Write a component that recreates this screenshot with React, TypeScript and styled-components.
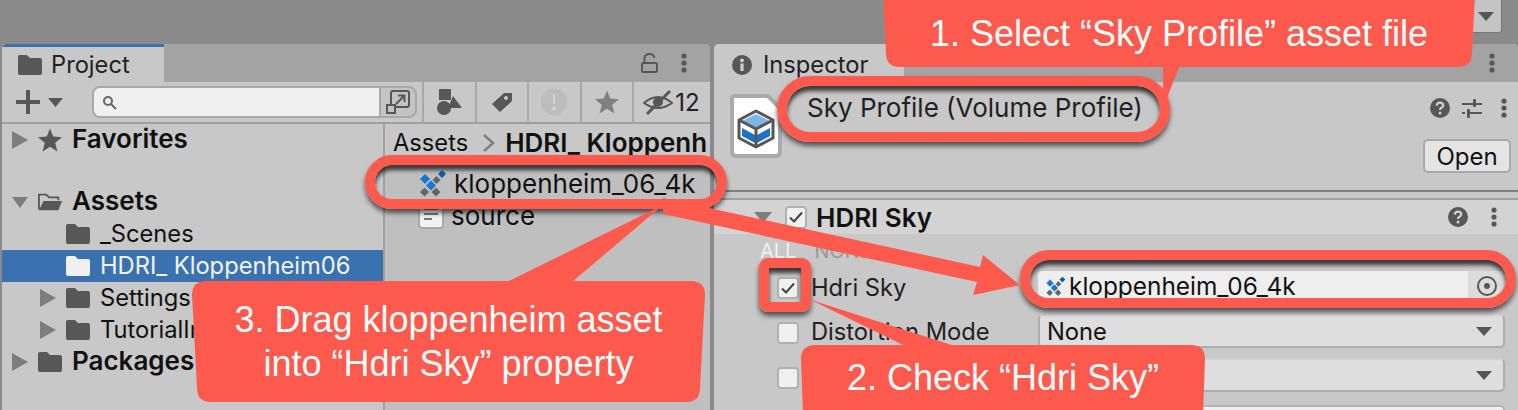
import React, { FC } from 'react';
import styled, { createGlobalStyle } from 'styled-components';

const GlobalStyle = createGlobalStyle`
  html, body {
    margin: 0;
    padding: 0;
    background: #8a8a8a;
  }
  * {
    box-sizing: border-box;
  }
`;

const Page = styled('div')`
  position: relative;
  display: flex;
  flex-direction: column;
  width: 1518px;
  height: 410px;
  overflow: hidden;
  background: #8a8a8a;
  color: #111;
  font-family: Inter, 'Noto Sans', sans-serif;
  font-size: 23.7px;
`;

const TopBar = styled('div')`
  display: flex;
  justify-content: flex-end;
  height: 44px;
  padding-right: 16px;
`;

const TopDropdown = styled('div')`
  display: flex;
  align-items: center;
  justify-content: center;
  width: 32px;
  height: 33px;
  background: #c4c4c4;
  border: 1px solid #777;
  border-top: none;
  border-radius: 0 0 3px 3px;
`;

const Panels = styled('div')`
  display: flex;
  flex: 1;
  gap: 4px;
  min-height: 0;
  padding-left: 2px;
`;

const ProjectPanel = styled('section')`
  display: flex;
  flex-direction: column;
  width: 708px;
  background: #c8c8c8;
  border-radius: 5px 5px 0 0;
  overflow: hidden;
`;

const InspectorPanel = styled('section')`
  display: flex;
  flex-direction: column;
  flex: 1;
  background: #c8c8c8;
  border-radius: 5px 5px 0 0;
  overflow: hidden;
`;

const TabStrip = styled('div')`
  display: flex;
  align-items: center;
  justify-content: space-between;
  height: 38px;
  padding-right: 23px;
  background: #a3a3a3;
  flex: none;
`;

const Tab = styled('div')<{ $width: number; $accent?: boolean }>`
  display: flex;
  align-items: center;
  gap: ${p => (p.$accent ? 9 : 11)}px;
  width: ${p => p.$width}px;
  height: 38px;
  padding-left: ${p => (p.$accent ? 16 : 18)}px;
  padding-top: ${p => (p.$accent ? 0 : 3)}px;
  background: #c8c8c8;
  border-top: ${p => (p.$accent ? '3px solid #3a72b0' : 'none')};
  color: #222;
`;

const TabActions = styled('div')`
  display: flex;
  align-items: center;
  gap: 23px;
`;

const Toolbar = styled('div')`
  display: flex;
  align-items: stretch;
  height: 42px;
  background: #c8c8c8;
  border-bottom: 2px solid #a0a0a0;
  flex: none;
`;

const AddButton = styled('div')`
  display: flex;
  align-items: center;
  gap: 8px;
  width: 90px;
  padding-left: 14px;
`;

const SearchBox = styled('div')`
  display: flex;
  width: 325px;
  height: 32px;
  margin-top: 4px;
  background: #c4c4c4;
  border: 2px solid #a8a8a8;
  border-radius: 8px;
  overflow: hidden;
`;

const SearchInput = styled('div')`
  display: flex;
  align-items: center;
  width: 287px;
  padding-left: 8px;
  background: #f0f0f0;
  border-right: 2px solid #a8a8a8;
`;

const SearchScope = styled('div')`
  display: flex;
  align-items: center;
  justify-content: center;
  flex: 1;
`;

const ToolGroup = styled('div')`
  display: flex;
  margin-left: 5px;
  flex: 1;
`;

const ToolButton = styled('div')<{ $width?: number }>`
  display: flex;
  align-items: center;
  justify-content: center;
  gap: 2px;
  width: ${p => p.$width ?? 52.5}px;
  flex: none;
  border-left: 2px solid #a8a8a8;
  font-size: 24px;
  color: #222;
`;

const Browser = styled('div')`
  display: flex;
  flex: 1;
  min-height: 0;
`;

const Tree = styled('div')`
  display: flex;
  flex-direction: column;
  width: 381px;
  flex: none;
`;

const TreeRow = styled('div')<{ $depth?: number; $selected?: boolean; $bold?: boolean; $gapAfter?: number }>`
  display: flex;
  align-items: center;
  height: 32px;
  flex: none;
  padding-left: ${p => 10 + (p.$depth ?? 0) * 28}px;
  margin-bottom: ${p => p.$gapAfter ?? 0}px;
  background: ${p => (p.$selected ? '#3a72b0' : 'transparent')};
  color: ${p => (p.$selected ? '#f2f2f2' : '#111')};
  font-size: ${p => (p.$bold ? 26 : 23.7)}px;
  font-weight: ${p => (p.$bold ? 600 : 400)};
  line-height: ${p => (p.$bold ? 28 : 32)}px;
  white-space: nowrap;
`;

const Disclosure = styled('span')`
  display: flex;
  width: 16px;
  margin-right: 10px;
  flex: none;
`;

const RowIcon = styled('span')`
  display: flex;
  width: 24px;
  margin-right: 10px;
  flex: none;
`;

const BoldLabel = styled('span')`
  margin-bottom: 2px;
`;

const FileList = styled('div')`
  display: flex;
  flex-direction: column;
  flex: 1;
  min-width: 0;
  border-left: 2px solid #a0a0a0;
  background: #bfbfbf;
`;

const Breadcrumb = styled('div')`
  display: flex;
  align-items: center;
  height: 43px;
  padding: 0 0 6px 8px;
  background: #c8c8c8;
  white-space: nowrap;
  flex: none;
  svg {
    flex: none;
    margin: 0 10px 0 15px;
  }
`;

const CrumbStrong = styled('span')`
  font-size: 26px;
  font-weight: 600;
`;

const FileRow = styled('div')`
  display: flex;
  align-items: center;
  gap: 7px;
  height: 32px;
  padding-left: 33px;
  font-size: 26px;
  white-space: nowrap;
  flex: none;
`;

const AssetHeader = styled('div')`
  display: grid;
  grid-template-columns: 52px 1fr auto;
  column-gap: 25px;
  height: 110px;
  padding: 12px 7px 0 16px;
  border-bottom: 2px solid #808080;
  flex: none;
`;

const AssetTitle = styled('div')`
  line-height: 28px;
  font-size: 26px;
  color: #222;
  white-space: nowrap;
`;

const AssetActions = styled('div')`
  display: flex;
  flex-direction: column;
  align-items: flex-end;
  gap: 21px;
  padding-top: 4px;
`;

const IconRow = styled('div')<{ $gap: number; $inset?: number }>`
  display: flex;
  align-items: center;
  gap: ${p => p.$gap}px;
  padding-right: ${p => p.$inset ?? 0}px;
`;

const KebabSlot = styled('span')`
  display: flex;
  margin-left: 7px;
`;

const OpenButton = styled('div')`
  display: flex;
  align-items: center;
  justify-content: center;
  width: 88px;
  height: 34px;
  background: #e4e4e4;
  border: 2px solid #a8a8a8;
  border-radius: 5px;
  font-size: 24px;
`;

const SectionSpacer = styled('div')`
  height: 8px;
  border-bottom: 2px solid #a0a0a0;
  flex: none;
`;

const SectionHeader = styled('div')`
  display: flex;
  align-items: center;
  height: 34px;
  padding: 0 21px 0 40px;
  background: #d3d3d3;
  flex: none;
`;

const SectionTitle = styled('div')`
  flex: 1;
  margin-left: 9px;
  font-size: 26px;
  font-weight: 600;
`;

const SectionTriangle = styled('span')`
  display: flex;
  width: 18px;
  margin-right: 13px;
`;

const ToggleLinks = styled('div')`
  display: flex;
  align-items: center;
  gap: 18px;
  height: 36px;
  padding: 0 0 2px 46px;
  font-size: 20px;
  color: #f0f0f0;
  flex: none;
`;

const MutedLink = styled('span')`
  color: #999;
`;

const PropertyRows = styled('div')`
  display: flex;
  flex-direction: column;
  gap: 10px;
  padding: 0 13px 0 63px;
`;

const PropertyRow = styled('div')`
  display: grid;
  grid-template-columns: 22px 1fr 467px;
  column-gap: 12px;
  align-items: center;
  height: 34px;
  color: #222;
  flex: none;
`;

const CheckBox = styled('div')<{ $drop?: number }>`
  display: flex;
  align-items: center;
  justify-content: center;
  width: 22px;
  height: 22px;
  margin-top: ${p => (p.$drop ?? 0) * 2}px;
  background: #f0f0f0;
  border: 2px solid #b0b0b0;
  border-radius: 4px;
`;

const SectionCheck = styled(CheckBox)`
  height: 23px;
`;

const ObjectField = styled('div')`
  display: flex;
  align-items: stretch;
  height: 33px;
  background: #eeeeee;
  border-bottom: 2px solid #a8a8a8;
  border-radius: 4px;
  overflow: hidden;
  color: #111;
`;

const ObjectName = styled('div')`
  display: flex;
  align-items: center;
  gap: 3px;
  flex: 1;
  padding-left: 7px;
  font-size: 24.4px;
`;

const ObjectPicker = styled('div')`
  display: flex;
  align-items: center;
  justify-content: center;
  width: 37px;
  background: #dcdcdc;
`;

const SelectField = styled('div')`
  display: flex;
  align-items: center;
  justify-content: space-between;
  height: 34px;
  padding: 0 11px 0 7px;
  background: #dedede;
  border: 2px solid #adadad;
  border-top-color: #cfcfcf;
  border-radius: 5px;
  color: #111;
`;

const LightField = styled('div')`
  height: 34px;
  margin-top: 3px;
  background: #eeeeee;
  border: 2px solid #b4b4b4;
  border-radius: 5px;
`;

const Overlay = styled('svg')`
  position: absolute;
  top: 0;
  left: 0;
  width: 1518px;
  height: 410px;
  pointer-events: none;
`;

const Ring = styled('div')<{ $x: number; $y: number; $w: number; $h: number; $radius?: number }>`
  position: absolute;
  left: ${p => p.$x}px;
  top: ${p => p.$y}px;
  width: ${p => p.$w}px;
  height: ${p => p.$h}px;
  border: 10px solid #ff5a4d;
  border-radius: ${p => p.$radius ?? 40}px;
  box-shadow: 0 4px 5px rgba(0, 0, 0, 0.6), inset 0 5px 4px rgba(0, 0, 0, 0.72);
`;

// rounded shape whose lower edge is a little narrower than the upper one
function bubblePath(w: number, h: number, inset: number, r: number) {
  return [
    `M ${r} 0`,
    `L ${w - r} 0`,
    `Q ${w} 0 ${w} ${r}`,
    `L ${w - inset} ${h - r}`,
    `Q ${w - inset} ${h} ${w - inset - r} ${h}`,
    `L ${inset + r} ${h}`,
    `Q ${inset} ${h} ${inset} ${h - r}`,
    `L 0 ${r}`,
    `Q 0 0 ${r} 0`,
    'Z',
  ].join(' ');
}

const Bubble = styled('div')<{ $x: number; $y: number; $w: number; $h: number; $inset: number; $pad?: string }>`
  position: absolute;
  left: ${p => p.$x}px;
  top: ${p => p.$y}px;
  width: ${p => p.$w}px;
  height: ${p => p.$h}px;
  display: flex;
  align-items: center;
  justify-content: center;
  padding: ${p => p.$pad ?? '0'};
  background: #ff5a4d;
  clip-path: ${p => `path('${bubblePath(p.$w, p.$h, p.$inset, 14)}')`};
  color: #fff;
  font-family: 'Liberation Sans', Arial, sans-serif;
  font-size: 36px;
  line-height: 44px;
  text-align: center;
`;

const ICON = '#575757';

const Triangle: FC<{ dir: 'right' | 'down' | 'small'; size?: number }> = ({ dir, size = 16 }) => {
  if (dir === 'right') {
    return (
      <svg width={size} height={18} viewBox="0 0 16 18">
        <path d="M0 0 L16 9 L0 18 Z" fill="#7d7d7d" />
      </svg>
    );
  }
  return (
    <svg width={size} height={dir === 'small' ? 9 : 11} viewBox="0 0 16 10" preserveAspectRatio="none">
      <path d="M0 0 L16 0 L8 10 Z" fill={dir === 'small' ? ICON : '#7d7d7d'} />
    </svg>
  );
};

const Folder: FC<{ color?: string }> = ({ color = ICON }) => (
  <svg width="24" height="20" viewBox="0 0 24 20">
    <path d="M0 2 Q0 0 2 0 H9 L12 3 H22 Q24 3 24 5 V18 Q24 20 22 20 H2 Q0 20 0 18 Z" fill={color} />
  </svg>
);

const OpenFolder = () => (
  <svg width="26" height="20" viewBox="0 0 26 20">
    <path d="M1 18 V2 H9 L12 5 H22 V8" fill="none" stroke={ICON} strokeWidth="2" />
    <path d="M1 19 L6 9 H26 L22 19 Z" fill={ICON} />
  </svg>
);

const Star: FC<{ size?: number; color?: string }> = ({ size = 24, color = ICON }) => (
  <svg width={size} height={size} viewBox="0 0 24 24">
    <path d="M12 0.5 L15.2 8.5 L24 9.2 L17.2 14.8 L19.4 23.5 L12 18.8 L4.6 23.5 L6.8 14.8 L0 9.2 L8.8 8.5 Z" fill={color} />
  </svg>
);

const Kebab = () => (
  <svg width="6" height="20" viewBox="0 0 6 20">
    <circle cx="3" cy="3" r="2.6" fill={ICON} />
    <circle cx="3" cy="10" r="2.6" fill={ICON} />
    <circle cx="3" cy="17" r="2.6" fill={ICON} />
  </svg>
);

const Lock = () => (
  <svg width="17" height="20" viewBox="0 0 17 20" fill="none" stroke={ICON} strokeWidth="2">
    <rect x="1" y="10" width="15" height="9" rx="1.5" />
    <path d="M3.5 10 V5.5 Q3.5 1 8.5 1 Q12.5 1 13.5 5" />
  </svg>
);

const Help = () => (
  <svg width="20" height="20" viewBox="0 0 20 20">
    <circle cx="10" cy="10" r="10" fill={ICON} />
    <path d="M6.8 7.6 Q7 4.6 10 4.6 Q13.2 4.6 13.2 7.2 Q13.2 8.8 11.4 9.8 Q10 10.6 10 12" fill="none" stroke="#d0d0d0" strokeWidth="2.2" />
    <circle cx="10" cy="15" r="1.5" fill="#d0d0d0" />
  </svg>
);

const Sliders = () => (
  <svg width="20" height="20" viewBox="0 0 20 20" fill={ICON}>
    <rect x="0" y="5" width="11" height="2" />
    <rect x="11" y="1" width="3" height="8" rx="1" />
    <rect x="14" y="5" width="6" height="2" />
    <rect x="0" y="14" width="3" height="2" />
    <rect x="5" y="11" width="3" height="9" rx="1" />
    <rect x="8" y="14" width="12" height="2" />
  </svg>
);

const Tick = () => (
  <svg width="14" height="12" viewBox="0 0 14 12">
    <path d="M1 6.5 L5 10.5 L13 1.5" fill="none" stroke="#444" strokeWidth="2" />
  </svg>
);

const DIAMONDS: [number, number, number, string][] = [
  [24, 5, 4, '#0b5cad'],
  [18.5, 11, 4, '#666'],
  [7, 10, 5, '#1976d2'],
  [13, 16.5, 5, '#1976d2'],
  [6.5, 23, 4.5, '#666'],
  [18, 23, 4.5, '#666'],
];

const HdriIcon: FC<{ size?: number }> = ({ size = 29 }) => (
  <svg width={size} height={size} viewBox="0 0 29 29">
    {DIAMONDS.map(([x, y, r, fill]) => (
      <path key={`${x}-${y}`} d={`M${x} ${y - r} L${x + r} ${y} L${x} ${y + r} L${x - r} ${y} Z`} fill={fill} />
    ))}
  </svg>
);

const TextFile = () => (
  <svg width="26" height="27" viewBox="0 0 26 27">
    <rect x="1" y="1" width="24" height="25" rx="3" fill="#f2f2f2" stroke="#a8a8a8" strokeWidth="2" />
    <path d="M6 7 H20 M6 12 H20 M6 17 H14" stroke="#777" strokeWidth="2" />
  </svg>
);

const ProfileAsset = () => (
  <svg width="52" height="64" viewBox="0 0 52 64">
    <path d="M5 2 H38 L50 14 V58 Q50 62 46 62 H6 Q2 62 2 58 V5 Q2 2 5 2 Z" fill="#fff" stroke="#aaaaaa" strokeWidth="4" />
    <path d="M26 20 L40 27 L26 34 L12 27 Z" fill="#7fb6ea" />
    <path d="M12 34 L25 41 V49 L12 42 Z M40 34 L27 41 V49 L40 42 Z" fill="#1b72c9" />
    <path d="M26 17 L43 26 V44 L26 53 L9 44 V26 Z M9 26 L26 35 L43 26 M26 35 V53" fill="none" stroke="#575757" strokeWidth="3" strokeLinejoin="round" />
  </svg>
);

const App: FC = () => {
  return (
    <Page>
      <GlobalStyle />
      <TopBar>
        <TopDropdown>
          <Triangle dir="small" />
        </TopDropdown>
      </TopBar>
      <Panels>
        <ProjectPanel>
          <TabStrip>
            <Tab $width={162} $accent>
              <Folder />
              Project
            </Tab>
            <TabActions>
              <Lock />
              <Kebab />
            </TabActions>
          </TabStrip>
          <Toolbar>
            <AddButton>
              <svg width="24" height="24" viewBox="0 0 24 24">
                <path d="M0 10 H10 V0 H14 V10 H24 V14 H14 V24 H10 V14 H0 Z" fill={ICON} />
              </svg>
              <Triangle dir="small" size={15} />
            </AddButton>
            <SearchBox>
              <SearchInput>
                <svg width="15" height="15" viewBox="0 0 15 15" fill="none" stroke="#666" strokeWidth="2">
                  <circle cx="6" cy="6" r="4" />
                  <path d="M9 9 L14 14" />
                </svg>
              </SearchInput>
              <SearchScope>
                <svg width="24" height="24" viewBox="0 0 24 24" fill="none" stroke={ICON} strokeWidth="2">
                  <path d="M5 15 V3 Q5 1 7 1 H21 Q23 1 23 3 V15 Q23 17 21 17 H10" />
                  <rect x="1" y="15" width="8" height="8" />
                  <path d="M10 14 L18 6 M12 5.5 H18.5 V12" />
                </svg>
              </SearchScope>
            </SearchBox>
            <ToolGroup>
              <ToolButton>
                <svg width="25" height="26" viewBox="0 0 25 26" fill={ICON}>
                  <rect x="2" y="0" width="12" height="11" />
                  <path d="M16 7 L25 19 H11 Z" />
                  <circle cx="7" cy="19" r="7" />
                </svg>
              </ToolButton>
              <ToolButton>
                <svg width="20" height="20" viewBox="0 0 20 20" fill={ICON}>
                  <path fillRule="evenodd" d="M0 12 L11 2 Q12 1 13 1 H20 V8 Q20 9 19 10 L8 20 Z M14 4 a2 2 0 1 0 .01 0 Z" />
                </svg>
              </ToolButton>
              <ToolButton>
                <svg width="26" height="26" viewBox="0 0 26 26">
                  <path d="M8 0 H18 L26 8 V18 L18 26 H8 L0 18 V8 Z" fill="#bdbdbd" />
                  <path d="M12 5 H14 L14 15 H12 Z" fill="#d4d4d4" />
                  <circle cx="13" cy="19.5" r="2" fill="#d4d4d4" />
                </svg>
              </ToolButton>
              <ToolButton>
                <Star color="#808080" />
              </ToolButton>
              <ToolButton $width={77}>
                <svg width="30" height="26" viewBox="0 0 30 26" fill="none" stroke={ICON} strokeWidth="2">
                  <path d="M1 14 Q15 2 29 14 Q15 24 1 14 Z" />
                  <circle cx="15" cy="13" r="5" fill={ICON} stroke="none" />
                  <path d="M4 25 L27 2" strokeWidth="3" />
                </svg>
                12
              </ToolButton>
            </ToolGroup>
          </Toolbar>
          <Browser>
            <Tree>
              <TreeRow $bold $gapAfter={30}>
                <Disclosure>
                  <Triangle dir="right" />
                </Disclosure>
                <RowIcon>
                  <Star />
                </RowIcon>
                <BoldLabel>Favorites</BoldLabel>
              </TreeRow>
              <TreeRow $bold>
                <Disclosure>
                  <Triangle dir="down" />
                </Disclosure>
                <RowIcon>
                  <OpenFolder />
                </RowIcon>
                <BoldLabel>Assets</BoldLabel>
              </TreeRow>
              <TreeRow $depth={1}>
                <Disclosure />
                <RowIcon>
                  <Folder />
                </RowIcon>
                _Scenes
              </TreeRow>
              <TreeRow $depth={1} $selected>
                <Disclosure />
                <RowIcon>
                  <Folder color="#f0f0f0" />
                </RowIcon>
                HDRI_ Kloppenheim06
              </TreeRow>
              <TreeRow $depth={1}>
                <Disclosure>
                  <Triangle dir="right" />
                </Disclosure>
                <RowIcon>
                  <Folder />
                </RowIcon>
                Settings
              </TreeRow>
              <TreeRow $depth={1}>
                <Disclosure>
                  <Triangle dir="right" />
                </Disclosure>
                <RowIcon>
                  <Folder />
                </RowIcon>
                TutorialIn
              </TreeRow>
              <TreeRow $bold>
                <Disclosure>
                  <Triangle dir="right" />
                </Disclosure>
                <RowIcon>
                  <Folder />
                </RowIcon>
                <BoldLabel>Packages</BoldLabel>
              </TreeRow>
            </Tree>
            <FileList>
              <Breadcrumb>
                Assets
                <svg width="12" height="18" viewBox="0 0 12 18" fill="none" stroke="#808080" strokeWidth="2.5">
                  <path d="M1 1 L10 9 L1 17" />
                </svg>
                <CrumbStrong>HDRI_ Kloppenh</CrumbStrong>
              </Breadcrumb>
              <FileRow>
                <HdriIcon />
                kloppenheim_06_4k
              </FileRow>
              <FileRow>
                <TextFile />
                source
              </FileRow>
            </FileList>
          </Browser>
        </ProjectPanel>
        <InspectorPanel>
          <TabStrip>
            <Tab $width={190}>
              <svg width="20" height="20" viewBox="0 0 20 20">
                <circle cx="10" cy="10" r="10" fill={ICON} />
                <rect x="8.4" y="8.5" width="3.2" height="7.5" fill="#d0d0d0" />
                <circle cx="10" cy="5.4" r="1.9" fill="#d0d0d0" />
              </svg>
              Inspector
            </Tab>
            <TabActions>
              <Kebab />
            </TabActions>
          </TabStrip>
          <AssetHeader>
            <ProfileAsset />
            <AssetTitle>Sky Profile (Volume Profile)</AssetTitle>
            <AssetActions>
              <IconRow $gap={12} $inset={4}>
                <Help />
                <Sliders />
                <KebabSlot>
                  <Kebab />
                </KebabSlot>
              </IconRow>
              <OpenButton>Open</OpenButton>
            </AssetActions>
          </AssetHeader>
          <SectionSpacer />
          <SectionHeader>
            <SectionTriangle>
              <Triangle dir="down" size={18} />
            </SectionTriangle>
            <SectionCheck>
              <Tick />
            </SectionCheck>
            <SectionTitle>HDRI Sky</SectionTitle>
            <IconRow $gap={23}>
              <Help />
              <Kebab />
            </IconRow>
          </SectionHeader>
          <ToggleLinks>
            ALL
            <MutedLink>NONE</MutedLink>
          </ToggleLinks>
          <PropertyRows>
            <PropertyRow>
              <CheckBox $drop={1}>
                <Tick />
              </CheckBox>
              Hdri Sky
              <ObjectField>
                <ObjectName>
                  <HdriIcon size={21} />
                  kloppenheim_06_4k
                </ObjectName>
                <ObjectPicker>
                  <svg width="20" height="20" viewBox="0 0 20 20">
                    <circle cx="10" cy="10" r="9" fill="none" stroke={ICON} strokeWidth="2" />
                    <circle cx="10" cy="10" r="3" fill={ICON} />
                  </svg>
                </ObjectPicker>
              </ObjectField>
            </PropertyRow>
            <PropertyRow>
              <CheckBox $drop={2} />
              Distortion Mode
              <SelectField>
                None
                <Triangle dir="small" />
              </SelectField>
            </PropertyRow>
            <PropertyRow>
              <CheckBox $drop={3} />
              <span />
              <SelectField>
                <span />
                <Triangle dir="small" />
              </SelectField>
            </PropertyRow>
            <PropertyRow>
              <span />
              <span />
              <LightField />
            </PropertyRow>
          </PropertyRows>
        </InspectorPanel>
      </Panels>

      <Ring $x={777} $y={76} $w={393} $h={66} />
      <Ring $x={365} $y={155} $w={362} $h={54} $radius={30} />
      <Ring $x={1020} $y={250} $w={496} $h={58} $radius={32} />
      <Overlay viewBox="0 0 1518 410">
        <path d="M1163 60 H1182 L1167 98 L1163 92 Z" fill="#ff5a4d" />
        <path d="M663 198 L980 267 L983 255 L1020 285 L973 295 L977 282 L663 214 Z" fill="#ff5a4d" />
        <path d="M663 205 L572 282 H507 Z" fill="#ff5a4d" />
        <path d="M811 300 L955 346 H905 Z" fill="#ff5a4d" />
      </Overlay>
      <Ring $x={759} $y={258} $w={52} $h={54} $radius={9} />
      <Bubble $x={883} $y={-20} $w={592} $h={87} $inset={3} $pad="20px 0 0">
        1. Select “Sky Profile” asset file
      </Bubble>
      <Bubble $x={192} $y={281} $w={513} $h={121} $inset={5}>
        3. Drag kloppenheim asset
        <br />
        into “Hdri Sky” property
      </Bubble>
      <Bubble $x={801} $y={345} $w={404} $h={85} $inset={2} $pad="0 0 20px">
        2. Check “Hdri Sky”
      </Bubble>
    </Page>
  );
};

export default App;
